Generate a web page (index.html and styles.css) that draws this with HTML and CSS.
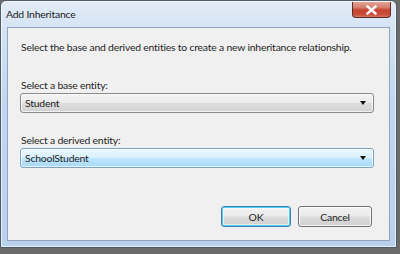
FILE: index.html
```html
<!DOCTYPE html>
<html>
<head>
<meta charset="utf-8">
<link rel="stylesheet" href="styles.css">
</head>
<body>
<div class="window">
  <div class="titlebar">
    <span class="title">Add Inheritance</span>
    <div class="close">
      <svg width="11" height="10" viewBox="0 0 11 10"><path d="M1.5 1.5 L9.5 8.5 M9.5 1.5 L1.5 8.5" stroke="#fff" stroke-width="2.4" stroke-linecap="square"/></svg>
    </div>
  </div>
  <div class="client">
    <p class="intro">Select the base and derived entities to create a new inheritance relationship.</p>
    <label class="label first">Select a base entity:</label>
    <div class="combo">
      <span>Student</span>
      <span class="arrow"></span>
    </div>
    <label class="label second">Select a derived entity:</label>
    <div class="combo hot">
      <span>SchoolStudent</span>
      <span class="arrow"></span>
    </div>
    <div class="buttons">
      <button class="btn ok">OK</button>
      <button class="btn cancel">Cancel</button>
    </div>
  </div>
</div>
</body>
</html>
```
FILE: styles.css
```css
html, body {
  margin: 0;
  padding: 0;
  background: #6b6b6b;
  width: 400px;
  height: 254px;
  overflow: hidden;
}
body {
  font-family: Lato, "Noto Sans", sans-serif;
  font-size: 10.4px;
  letter-spacing: -0.2px;
  color: #1e1e1e;
}
.window {
  box-sizing: border-box;
  width: 397px;
  height: 248px;
  border: 1px solid #4e5a66;
  border-radius: 6px 6px 0 0;
  background: linear-gradient(180deg, #e2ecf7 0%, #d4e3f4 12%, #c2d7ef 40%, #bad1ed 100%);
  padding: 0 6px 6px 6px;
  display: flex;
  flex-direction: column;
  box-shadow: inset 0 0 0 1px rgba(255,255,255,0.6);
}
.titlebar {
  height: 26px;
  display: flex;
  align-items: flex-start;
}
.title {
  margin-top: 7px;
  margin-left: -1px;
  color: #1a1a1a;
  white-space: nowrap;
}
.close {
  margin-left: auto;
  margin-right: -1px;
  width: 39px;
  height: 16px;
  margin-top: 1px;
  border: 1px solid #5e2a24;
  border-top: none;
  border-radius: 0 0 4px 4px;
  background: linear-gradient(180deg, #e4a395 0%, #d5806f 35%, #c6412f 55%, #c94f3c 85%, #d97b65 100%);
  display: flex;
  align-items: center;
  justify-content: center;
  box-sizing: border-box;
}
.client {
  flex: 1;
  background: #f0f0f0;
  border: 1px solid #8ea5c0;
  padding: 11px 15px 0 13px;
  display: flex;
  flex-direction: column;
}
.intro {
  margin: 0;
  line-height: 16px;
  white-space: nowrap;
}
.label {
  display: block;
  line-height: 15px;
  white-space: nowrap;
}
.label.first {
  margin-top: 23px;
}
.label.second {
  margin-top: 20px;
}
.combo {
  box-sizing: border-box;
  height: 20px;
  margin-left: -1px;
  border: 1px solid #8a8a8a;
  border-radius: 3px;
  background: linear-gradient(180deg, #f3f3f3 0%, #ebebeb 48%, #dddddd 52%, #d2d2d2 100%);
  display: flex;
  align-items: center;
  padding: 0 7px 0 4px;
  box-shadow: inset 0 0 0 1px rgba(255,255,255,0.7);
}
.combo.hot {
  border-color: #7ea4c4;
  background: linear-gradient(180deg, #eaf6fd 0%, #d9f0fc 48%, #bee6fd 52%, #a7d9f5 100%);
}
.combo span:first-child {
  flex: 1;
}
.arrow {
  width: 0;
  height: 0;
  border-left: 3.5px solid transparent;
  border-right: 3.5px solid transparent;
  border-top: 4px solid #111;
}
.buttons {
  margin-top: auto;
  margin-bottom: 13px;
  display: flex;
  justify-content: flex-end;
  gap: 7px;
  padding-right: 2px;
}
.btn {
  box-sizing: border-box;
  height: 21px;
  font-family: inherit;
  font-size: 10.4px;
  letter-spacing: -0.2px;
  color: #1e1e1e;
  border: 1px solid #707070;
  border-radius: 3px;
  background: linear-gradient(180deg, #f2f2f2 0%, #ebebeb 48%, #dddddd 52%, #cfcfcf 100%);
  box-shadow: inset 0 0 0 1px rgba(255,255,255,0.8);
  padding: 0;
}
.btn.ok {
  width: 70px;
  border-color: #3c7fb1;
  box-shadow: inset 0 0 0 1px #48d0f5, inset 0 0 0 2px rgba(255,255,255,0.5);
}
.btn.cancel {
  width: 74px;
}
```
